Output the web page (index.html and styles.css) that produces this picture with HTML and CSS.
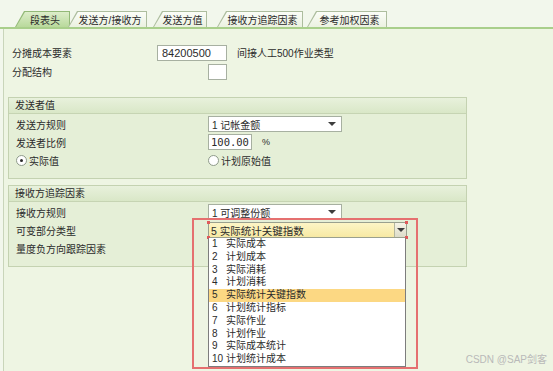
FILE: index.html
```html
<!DOCTYPE html>
<html lang="zh-CN">
<head>
  <meta charset="UTF-8">
  <title>分摊段</title>
  <link rel="stylesheet" href="styles.css">
</head>
<body>

  <div class="tabs">
    <div class="tab active"><span>段表头</span></div>
    <div class="tab"><span>发送方/接收方</span></div>
    <div class="tab"><span>发送方值</span></div>
    <div class="tab"><span>接收方追踪因素</span></div>
    <div class="tab"><span>参考加权因素</span></div>
  </div>

  <div class="panel">
    <div class="field-row">
      <span class="top-label">分摊成本要素</span>
      <div class="input code">84200500</div>
      <span class="desc">间接人工500作业类型</span>
    </div>
    <div class="field-row">
      <span class="top-label">分配结构</span>
      <div class="checkbox"></div>
    </div>

    <section class="group">
      <div class="group-head">发送者值</div>
      <div class="group-body">
        <div class="row">
          <span class="label">发送方规则</span>
          <div class="select">1 记帐金额<i class="caret"></i></div>
        </div>
        <div class="row">
          <span class="label">发送者比例</span>
          <div class="input percent">100.00</div>
          <span class="unit">%</span>
        </div>
        <div class="row">
          <span class="label radio-cell"><i class="radio checked"></i>实际值</span>
          <span class="radio-cell"><i class="radio"></i>计划原始值</span>
        </div>
      </div>
    </section>

    <section class="group second">
      <div class="group-head">接收方追踪因素</div>
      <div class="group-body">
        <div class="row">
          <span class="label">接收方规则</span>
          <div class="select">1 可调整份额<i class="caret"></i></div>
        </div>
        <div class="row">
          <span class="label">可变部分类型</span>
          <div class="combo">
            <span class="combo-text">5 实际统计关键指数</span>
            <span class="combo-btn"><i class="caret"></i></span>
            <i class="handle tl"></i><i class="handle tr"></i><i class="handle bl"></i><i class="handle br"></i>
            <div class="mark"></div>
            <ul class="dropdown">
              <li><b>1</b>实际成本</li>
              <li><b>2</b>计划成本</li>
              <li><b>3</b>实际消耗</li>
              <li><b>4</b>计划消耗</li>
              <li class="current"><b>5</b>实际统计关键指数</li>
              <li><b>6</b>计划统计指标</li>
              <li><b>7</b>实际作业</li>
              <li><b>8</b>计划作业</li>
              <li><b>9</b>实际成本统计</li>
              <li><b>10</b>计划统计成本</li>
            </ul>
          </div>
        </div>
        <div class="row">
          <span class="label">量度负方向跟踪因素</span>
        </div>
      </div>
    </section>
  </div>

  <div class="watermark">CSDN @SAP剑客</div>

</body>
</html>
```

FILE: styles.css
```css
body {
  margin: 0;
  width: 553px;
  height: 371px;
  overflow: hidden;
  position: relative;
  background: #f2f7ec;
  color: #2b2b2b;
  font-family: "Liberation Sans", "Noto Sans CJK SC", sans-serif;
  font-size: 10px;
}

/* tab strip */
.tabs {
  display: flex;
  align-items: flex-end;
  height: 16px;
  padding-top: 11px;
  border-bottom: 2px solid #a9cf8b;
}
.tab {
  height: 16px;
  box-sizing: border-box;
  padding: 1px 1px 0;
  background: #adbd9e;
  clip-path: polygon(9px 0, 100% 0, 100% 100%, 0 100%);
}
.tab span {
  display: flex;
  align-items: center;
  justify-content: center;
  height: 100%;
  padding-left: 5px;
  background: linear-gradient(#fbfdf7, #ebf1e1);
  clip-path: polygon(9px 0, 100% 0, 100% 100%, 0 100%);
}
.tab.active {
  background: #93b978;
}
.tab.active span {
  background: linear-gradient(#dcedc9, #b9d99c);
}
.tab:nth-child(1) { margin-left: 15px; width: 55px; }
.tab:nth-child(2) { margin-left: -2px; width: 79px; }
.tab:nth-child(3) { margin-left: 6px; width: 54px; }
.tab:nth-child(4) { margin-left: 10px; width: 86px; }
.tab:nth-child(5) { margin-left: 4px; width: 80px; }

/* main panel */
.panel {
  margin-left: 3px;
  height: 342px;
  box-sizing: border-box;
  padding: 14px 0 0 4px;
  border-left: 1px solid #c9d5ba;
  background: #eef5e3;
}
.field-row {
  display: flex;
  align-items: center;
  height: 19px;
  padding-left: 4px;
}
.top-label {
  width: 145px;
}
.input {
  height: 16px;
  box-sizing: border-box;
  border: 1px solid #a7b0a1;
  background: #fff;
  display: flex;
  align-items: center;
}
.code {
  width: 70px;
  padding-left: 4px;
  font-size: 11px;
}
.desc {
  margin-left: 10px;
}
.checkbox {
  margin-left: 51px;
  width: 19px;
  height: 16px;
  box-sizing: border-box;
  border: 1px solid #a7b0a1;
  background: #fff;
}

/* group boxes */
.group {
  margin-top: 16px;
  width: 457px;
  border: 1px solid #c4d2b1;
  background: #e5efd7;
}
.group.second {
  margin-top: 6px;
}
.group-head {
  height: 15px;
  line-height: 15px;
  padding-left: 6px;
  border-bottom: 1px solid #c6d4b3;
  background: linear-gradient(#e8f1dc, #d9e7c7);
}
.group-body {
  padding: 1px 0 9px 7px;
}
.row {
  display: flex;
  align-items: center;
  height: 18px;
}
.label {
  width: 192px;
  flex: none;
}
.select {
  width: 134px;
  height: 16px;
  box-sizing: border-box;
  padding: 0 5px 0 3px;
  border: 1px solid #a7b0a1;
  background: #fff;
  display: flex;
  align-items: center;
  justify-content: space-between;
}
.caret {
  width: 0;
  height: 0;
  border-left: 4px solid transparent;
  border-right: 4px solid transparent;
  border-top: 4px solid #3d3d3d;
}
.percent {
  width: 44px;
  padding-left: 2px;
  font-family: "DejaVu Sans Mono", monospace;
  font-size: 10.5px;
}
.unit {
  margin-left: 10px;
  font-size: 9px;
}
.radio-cell {
  display: flex;
  align-items: center;
}
.radio {
  width: 9px;
  height: 9px;
  margin-right: 2px;
  border: 1px solid #8f9b8b;
  border-radius: 50%;
  background: #fff;
  display: flex;
  align-items: center;
  justify-content: center;
}
.radio.checked::after {
  content: "";
  width: 3px;
  height: 3px;
  border-radius: 50%;
  background: #2b2b2b;
}

/* open value list */
.combo {
  position: relative;
  width: 199px;
  height: 16px;
  box-sizing: border-box;
  border: 1px solid #9aa08e;
  background: linear-gradient(#fdf5c6, #f7e9a3);
  display: flex;
  align-items: center;
  justify-content: space-between;
}
.combo-text {
  padding-left: 2px;
  font-size: 10.5px;
}
.combo-btn {
  width: 12px;
  height: 14px;
  box-sizing: border-box;
  border-left: 1px solid #b4b79f;
  background: linear-gradient(#f6f4e6, #dcdcc9);
  display: flex;
  align-items: center;
  justify-content: center;
}
.handle {
  position: absolute;
  width: 3px;
  height: 3px;
  background: #e05b5b;
}
.handle.tl { left: -2px; top: -2px; }
.handle.tr { right: -2px; top: -2px; }
.handle.bl { left: -2px; bottom: -2px; }
.handle.br { right: -2px; bottom: -2px; }
.mark {
  position: absolute;
  left: -17px;
  top: -5px;
  width: 226px;
  height: 151px;
  box-sizing: border-box;
  border: 2px solid #e57070;
}
.dropdown {
  position: absolute;
  left: -1px;
  top: 15px;
  width: 198px;
  margin: 0;
  padding: 0;
  list-style: none;
  box-sizing: border-box;
  border: 1px solid #7d7d7d;
  border-top: none;
  background: #fff;
}
.dropdown li {
  display: flex;
  height: 12.8px;
  line-height: 12.8px;
  padding-left: 3px;
}
.dropdown b {
  width: 14px;
  font-weight: normal;
}
.dropdown .current {
  background: #fcd883;
}

.watermark {
  position: absolute;
  right: 6px;
  bottom: 5px;
  color: #b9b9b9;
  font-size: 10px;
}
```
